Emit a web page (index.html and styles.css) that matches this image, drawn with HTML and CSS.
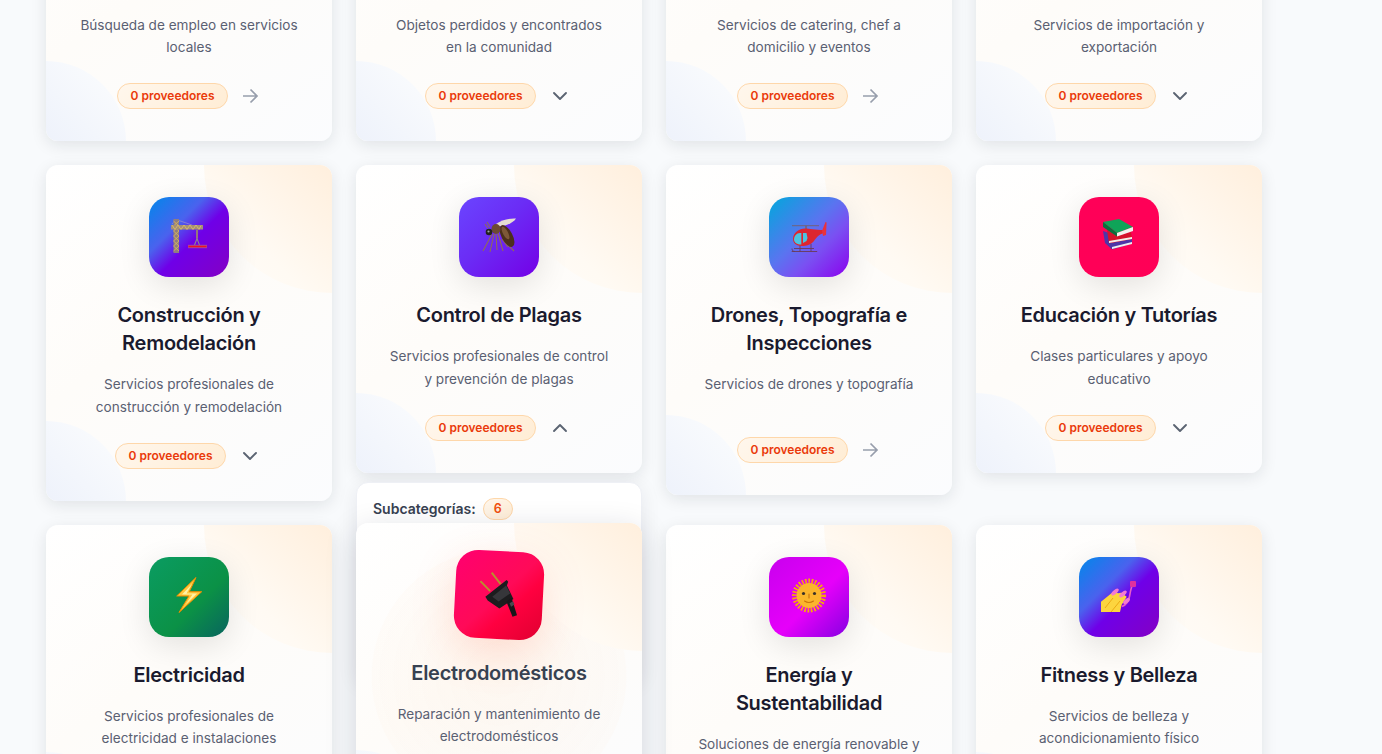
FILE: index.html
```html
<!DOCTYPE html>
<html lang="es">
<head>
<meta charset="utf-8">
<title>Categorías</title>
<link rel="stylesheet" href="styles.css">
</head>
<body>
<main class="grid">

  <div class="cell"><article class="card">
    <div class="icon g-blue"></div>
    <h3 class="title">Empleos</h3>
    <p class="desc">Búsqueda de empleo en servicios locales</p>
    <div class="foot"><span class="badge">0 proveedores</span>
      <svg class="arrow" viewBox="0 0 20 20"><path d="M3 10h14M10.500 3.500 17 10l-6.500 6.500"/></svg></div>
  </article></div>

  <div class="cell"><article class="card">
    <div class="icon g-violet"></div>
    <h3 class="title">Objetos Perdidos</h3>
    <p class="desc">Objetos perdidos y encontrados en la comunidad</p>
    <div class="foot"><span class="badge">0 proveedores</span>
      <span class="toggle"><svg class="chev" viewBox="0 0 24 24"><path d="m6 9 6 6 6-6"/></svg></span></div>
  </article></div>

  <div class="cell"><article class="card">
    <div class="icon g-red"></div>
    <h3 class="title">Catering</h3>
    <p class="desc">Servicios de catering, chef a domicilio y eventos</p>
    <div class="foot"><span class="badge">0 proveedores</span>
      <svg class="arrow" viewBox="0 0 20 20"><path d="M3 10h14M10.500 3.500 17 10l-6.500 6.500"/></svg></div>
  </article></div>

  <div class="cell"><article class="card">
    <div class="icon g-sky"></div>
    <h3 class="title">Comercio Exterior</h3>
    <p class="desc">Servicios de importación y exportación</p>
    <div class="foot"><span class="badge">0 proveedores</span>
      <span class="toggle"><svg class="chev" viewBox="0 0 24 24"><path d="m6 9 6 6 6-6"/></svg></span></div>
  </article></div>

  <div class="cell"><article class="card">
    <div class="icon g-blue">
      <svg class="emoji" viewBox="0 0 36 36">
        <path d="M1 5 5 .5 21 6" fill="none" stroke="#a99bc8" stroke-width=".6"/>
        <rect x="2.500" y="0" width="5.500" height="34" fill="#8f7f80"/>
        <path d="M2.500 2 8 7 2.500 12 8 17 2.500 22 8 27 2.500 32M8 2 2.500 7 8 12 2.500 17 8 22 2.500 27 8 32" fill="none" stroke="#d8b25a" stroke-width=".9"/>
        <rect x="0" y="6" width="32" height="4.500" fill="#a38f78"/>
        <path d="M1 6l3 4.500 3-4.500 3 4.500 3-4.500 3 4.500 3-4.500 3 4.500 3-4.500 3 4.500 2-4" fill="none" stroke="#dcbc66" stroke-width=".9"/>
        <path d="M26 10.500v9" stroke="#9b8470" stroke-width="1.800"/>
        <path d="M23.500 26 26 19.500l2.500 6.500" fill="none" stroke="#8f8590" stroke-width="1.100"/>
        <rect x="17" y="25.800" width="19" height="3.400" fill="#a34a9c"/>
        <rect x="17.500" y="26.800" width="18" height="1.400" fill="#f0141e"/>
      </svg>
    </div>
    <h3 class="title">Construcción y Remodelación</h3>
    <p class="desc">Servicios profesionales de construcción y remodelación</p>
    <div class="foot"><span class="badge">0 proveedores</span>
      <span class="toggle"><svg class="chev" viewBox="0 0 24 24"><path d="m6 9 6 6 6-6"/></svg></span></div>
  </article></div>

  <div class="cell">
    <article class="card">
      <div class="icon g-violet">
        <svg class="emoji" viewBox="0 0 36 36">
          <path d="M15 5C20 1 29-1 35-.500 32 4 24 8 16 7Z" fill="#e6ddd2"/>
          <path d="M11 15 2 32M13 15 9 33M15 15l1 16M17 14l5 18M21 20l6 8M25 24l8 8M9 8 6 3M7 9 4 5" fill="none" stroke="#8f6c58" stroke-width="1.100"/>
          <ellipse cx="26" cy="17" rx="5.500" ry="12" transform="rotate(-28 26 17)" fill="#4c2f1c"/>
          <ellipse cx="24.500" cy="14" rx="2.500" ry="7" transform="rotate(-28 24.500 14)" fill="#7d5838"/>
          <ellipse cx="15" cy="10" rx="4.500" ry="5" fill="#6d4a33"/>
          <circle cx="8" cy="13" r="3.300" fill="#23211f"/>
          <circle cx="7.500" cy="12.500" r="1.100" fill="#9aa3a8"/>
        </svg>
      </div>
      <h3 class="title">Control de Plagas</h3>
      <p class="desc">Servicios profesionales de control y prevención de plagas</p>
      <div class="foot"><span class="badge">0 proveedores</span>
        <span class="toggle"><svg class="chev" viewBox="0 0 24 24"><path d="m6 15 6-6 6 6"/></svg></span></div>
    </article>
    <aside class="panel">
      <div class="panel-head"><span class="panel-label">Subcategorías:</span><span class="panel-count">6</span></div>
    </aside>
  </div>

  <div class="cell"><article class="card">
    <div class="icon g-sky">
      <svg class="emoji" viewBox="0 0 36 36">
        <path d="M1 6.700h27" stroke="#75606e" stroke-width=".9"/>
        <path d="M15 6.700v4" stroke="#75606e" stroke-width="1.500"/>
        <path d="M.7 32.500h25.500M1 29.500c0 2 1 3 3 3M9 26v6.500M20 25v7.500M3 29.500h20" fill="none" stroke="#6b3a58" stroke-width=".9"/>
        <path d="M14 9.500C18 9.500 24 11 33 11V14C28 15 25 19 23 22 20 26 15 27 11 27 5 27 2 24 2 20 2 14 8 9.500 14 9.500Z" fill="#dc2630"/>
        <path d="M31 12 34.500 3l1.100.500L35 16l-3 1Z" fill="#e8323c"/>
        <path d="M3 20.500C3 17 5.500 14 9 14h1.300V25.500C6 25.500 3 23.500 3 20.500Z" fill="#4cc4e0"/>
        <path d="M12 14h3.500l1 5-1 3-3.500 2Z" fill="#4cc4e0"/>
      </svg>
    </div>
    <h3 class="title">Drones, Topografía e Inspecciones</h3>
    <p class="desc">Servicios de drones y topografía</p>
    <div class="foot"><span class="badge">0 proveedores</span>
      <svg class="arrow" viewBox="0 0 20 20"><path d="M3 10h14M10.500 3.500 17 10l-6.500 6.500"/></svg></div>
  </article></div>

  <div class="cell"><article class="card">
    <div class="icon g-red">
      <svg class="emoji" viewBox="0 0 36 36">
        <path d="M2 12 8 14V24L31 20v4.500L11 30.500 4 24Z" fill="#4d35a8"/>
        <path d="M11 28 31 23v2L11 30Z" fill="#eeeeee"/>
        <path d="M6 11 16 17 30 13 31 20 8 24.500Z" fill="#d4122a"/>
        <path d="M8 22 31 18v2L8 24Z" fill="#f3f0ea"/>
        <path d="M2 3 18 0 32 8 16 14Z" fill="#0fa458"/>
        <path d="M16 14 32 8v4L16 17.500Z" fill="#f2f2ee"/>
        <path d="M2 3 16 14v3.500L2 8Z" fill="#07703c"/>
      </svg>
    </div>
    <h3 class="title">Educación y Tutorías</h3>
    <p class="desc">Clases particulares y apoyo educativo</p>
    <div class="foot"><span class="badge">0 proveedores</span>
      <span class="toggle"><svg class="chev" viewBox="0 0 24 24"><path d="m6 9 6 6 6-6"/></svg></span></div>
  </article></div>

  <div class="cell"><article class="card">
    <div class="icon g-green">
      <svg class="emoji" viewBox="0 0 36 36">
        <path d="M25-1.500 5.700 17H18L8 33.500 30.700 12.700H18.300Z" fill="#ffc83d" stroke="#f08c00" stroke-width="1" stroke-linejoin="round"/>
        <path d="M21 5 11 15.500h10.500L15 25l11-10.500H15.500Z" fill="#fff3a6"/>
      </svg>
    </div>
    <h3 class="title">Electricidad</h3>
    <p class="desc">Servicios profesionales de electricidad e instalaciones</p>
    <div class="foot"><span class="badge">0 proveedores</span>
      <span class="toggle"><svg class="chev" viewBox="0 0 24 24"><path d="m6 9 6 6 6-6"/></svg></span></div>
  </article></div>

  <div class="cell"><article class="card is-hover">
    <div class="icon g-plug">
      <svg class="emoji" viewBox="0 0 36 36">
        <path d="M10.300-2 19 8M.500 6.300l9.300 8.600" stroke="#b8902e" stroke-width="1.800"/>
        <path d="M5.700 20.200 24.200 4.100l1.500 1.500-1 3.400L31.300 21 19 30.300 8 23.500Z" fill="#1c1c1e"/>
        <path d="M12 20 24 9l4 7-10 8Z" fill="#36363a"/>
        <path d="M25 23.500 29.500 20l5.800 15.600-4 1.400Z" fill="#17171a"/>
        <path d="M28 25l3-2 1.500 3-3 2Z" fill="#4a4a50"/>
      </svg>
    </div>
    <h3 class="title">Electrodomésticos</h3>
    <p class="desc">Reparación y mantenimiento de electrodomésticos</p>
    <div class="foot"><span class="badge">0 proveedores</span>
      <span class="toggle"><svg class="chev" viewBox="0 0 24 24"><path d="m6 9 6 6 6-6"/></svg></span></div>
  </article></div>

  <div class="cell"><article class="card">
    <div class="icon g-sun">
      <svg class="emoji" viewBox="0 0 36 36">
        <circle cx="18" cy="16.500" r="14.500" fill="none" stroke="#f5a80a" stroke-width="5" stroke-dasharray="1.700 1.500"/>
        <circle cx="18" cy="16.500" r="12.500" fill="#fbb52c"/>
        <circle cx="12.500" cy="14.500" r="1.600" fill="#3a3128"/>
        <circle cx="23.500" cy="14.500" r="1.600" fill="#3a3128"/>
        <path d="M18 15v4M13.500 22c3 2 6 2 9 0" fill="none" stroke="#c9740c" stroke-width="1.100" stroke-linecap="round"/>
      </svg>
    </div>
    <h3 class="title">Energía y Sustentabilidad</h3>
    <p class="desc">Soluciones de energía renovable y sustentabilidad</p>
    <div class="foot"><span class="badge">0 proveedores</span>
      <span class="toggle"><svg class="chev" viewBox="0 0 24 24"><path d="m6 9 6 6 6-6"/></svg></span></div>
  </article></div>

  <div class="cell"><article class="card">
    <div class="icon g-blue">
      <svg class="emoji" viewBox="0 0 36 36">
        <path d="M0 22.700 12.300 12.700l5 1.500 3-.500 5.400 4-5 8-1.700 7.300H0Z" fill="#fcd53f"/>
        <path d="M4 29 12 19M10 33 19 22" stroke="#e9a50f" stroke-width=".9"/>
        <path d="M21 27.500c5-2 7-7 7.500-10 .5-3 1-6 2.500-11" fill="none" stroke="#e85cc8" stroke-width="1.600"/>
        <rect x="29" y="2" width="6" height="6" rx="1" fill="#e0309e"/>
        <ellipse cx="14" cy="13" rx="2" ry="4.500" transform="rotate(50 14 13)" fill="#f57ad0"/>
        <ellipse cx="22" cy="15" rx="2" ry="4.500" transform="rotate(50 22 15)" fill="#f57ad0"/>
        <ellipse cx="25.500" cy="22" rx="2" ry="4" transform="rotate(50 25.500 22)" fill="#f57ad0"/>
      </svg>
    </div>
    <h3 class="title">Fitness y Belleza</h3>
    <p class="desc">Servicios de belleza y acondicionamiento físico</p>
    <div class="foot"><span class="badge">0 proveedores</span>
      <span class="toggle"><svg class="chev" viewBox="0 0 24 24"><path d="m6 9 6 6 6-6"/></svg></span></div>
  </article></div>

</main>
</body>
</html>
```
FILE: styles.css
```css
* { box-sizing: border-box; }

html, body {
  margin: 0;
  height: 754px;
  overflow: hidden;
  background: #f8fafc;
}

body {
  font-family: Inter, "Liberation Sans", sans-serif;
  color: #1a1a2e;
}

/* the page is photographed scrolled down: the first row is cut by the top edge */
.grid {
  display: grid;
  grid-template-columns: repeat(4, 286px);
  gap: 24px;
  align-items: start;
  margin-top: -166.38px;
  padding-left: 46px;
}

.cell { position: relative; }

.card {
  position: relative;
  overflow: hidden;
  display: flex;
  flex-direction: column;
  align-items: center;
  padding: 32px;
  border-radius: 12px;
  text-align: center;
  background: linear-gradient(145deg, #ffffff 0%, #fefcf9 45%, #fbfcfe 100%);
  box-shadow: 0 4px 16px rgba(20, 25, 40, 0.1);
}

.card::before {
  content: "";
  position: absolute;
  top: 0;
  right: 0;
  width: 128px;
  height: 128px;
  border-bottom-left-radius: 100%;
  background: linear-gradient(225deg, #ffefdd 0%, #fffaf3 60%, #fffdfa 100%);
}

.card::after {
  content: "";
  position: absolute;
  left: 0;
  bottom: 0;
  width: 80px;
  height: 80px;
  border-top-right-radius: 100%;
  background: linear-gradient(45deg, #eef2fb 0%, #f8fafd 70%, #fbfbfd 100%);
}

.icon {
  position: relative;
  z-index: 1;
  flex: none;
  display: flex;
  align-items: center;
  justify-content: center;
  width: 80px;
  height: 80px;
  margin-bottom: 24px;
  border-radius: 20px;
  box-shadow: 0 8px 32px rgba(0, 0, 0, 0.11);
}

.emoji {
  width: 36px;
  height: 36px;
  overflow: visible;
}

.g-blue { background: linear-gradient(135deg, #0088ea 0%, #4a62ee 35%, #6f00e8 55%, #8400c4 100%); }
.g-violet { background: linear-gradient(135deg, #6a45ff 0%, #6b2cf5 45%, #7400e6 100%); }
.g-sky { background: linear-gradient(135deg, #00a8dc 0%, #5a74f0 45%, #7a50f2 65%, #8b00ee 100%); }
.g-red { background: linear-gradient(135deg, #ff0058 0%, #ff0056 100%); }
.g-green { background: linear-gradient(135deg, #0a9c62 0%, #0b9146 60%, #08645f 100%); }
.g-sun { background: linear-gradient(135deg, #c800ee 0%, #e600fa 55%, #8600e2 100%); }
.g-plug { background: linear-gradient(135deg, #ff0070 0%, #ff0a58 50%, #ff0040 65%, #e00030 100%); }

.title {
  position: relative;
  z-index: 1;
  margin: 0 0 16px;
  font-size: 20px;
  font-weight: 600;
  line-height: 28px;
  letter-spacing: -0.28px;
  color: #1a1a2e;
}

.desc {
  position: relative;
  z-index: 1;
  min-height: 39.2px;
  margin: 0 0 24.7px;
  font-size: 13.6px;
  line-height: 1.65;
  color: #5a6072;
}

.foot {
  position: relative;
  z-index: 1;
  display: flex;
  align-items: center;
  gap: 12px;
  margin-right: 1px;
}

.badge {
  display: block;
  width: 111px;
  height: 26px;
  border: 1px solid #fed7aa;
  border-radius: 13px;
  background: linear-gradient(135deg, #fff7ed, #ffedd5);
  font-size: 12px;
  font-weight: 600;
  line-height: 24px;
  color: #ea3a0b;
}

.arrow {
  display: block;
  width: 20px;
  height: 20px;
  fill: none;
  stroke: #979eac;
  stroke-width: 1.7;
}

.toggle {
  display: flex;
  width: 24px;
  height: 24px;
}

.chev {
  display: block;
  width: 24px;
  height: 24px;
  fill: none;
  stroke: #5b6472;
  stroke-width: 1.9;
  stroke-linecap: round;
  stroke-linejoin: round;
}

.panel {
  position: absolute;
  z-index: 5;
  top: calc(100% + 9px);
  left: 0;
  right: 0;
  height: 200px;
  padding: 15px 16px;
  border: 1px solid #eef0f5;
  border-radius: 12px;
  background: #fff;
  box-shadow: 0 4px 20px rgba(20, 25, 50, 0.08);
}

.panel-head {
  display: flex;
  align-items: center;
  gap: 7px;
  height: 22px;
}

.panel-label {
  font-size: 14px;
  font-weight: 600;
  color: #374151;
}

.panel-count {
  width: 30px;
  height: 22px;
  border: 1px solid #fed7aa;
  border-radius: 11px;
  background: linear-gradient(135deg, #fff7ed, #ffedd5);
  font-size: 12.5px;
  font-weight: 600;
  line-height: 20px;
  text-align: center;
  color: #f0500f;
}

/* hovered card */
.cell:has(.is-hover) { z-index: 10; }

.is-hover {
  transform: translateY(-2px);
  box-shadow: 0 8px 32px rgba(20, 25, 50, 0.16);
  background:
    radial-gradient(circle 128px at 50% 50%, rgba(255, 170, 90, 0.06) 0, rgba(255, 170, 90, 0.025) 99%, transparent 100%),
    linear-gradient(145deg, #ffffff 0%, #fefcf9 45%, #fbfcfe 100%);
}

.is-hover .icon {
  transform: scale(1.1) rotate(3deg);
  box-shadow: 0 12px 40px rgba(255, 90, 50, 0.18);
}

.is-hover .title { color: #374151; }
```
